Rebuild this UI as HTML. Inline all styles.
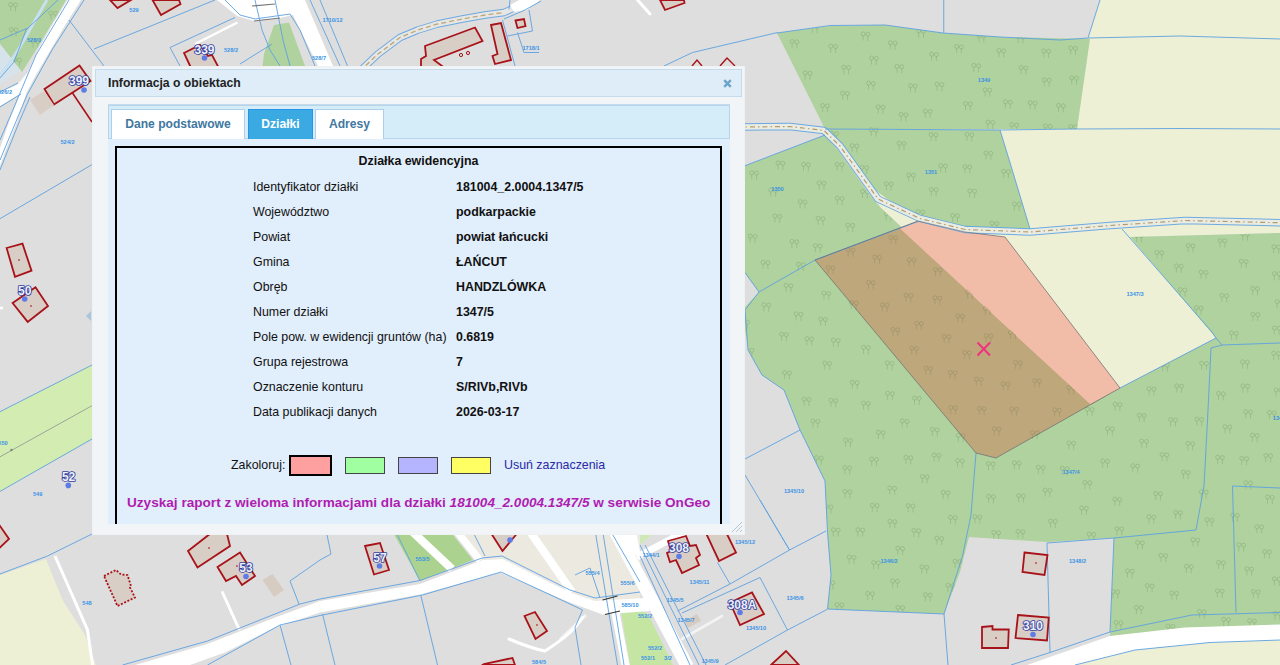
<!DOCTYPE html>
<html lang="pl"><head><meta charset="utf-8"><title>Informacja o obiektach</title>
<style>
html,body{margin:0;padding:0;width:1280px;height:665px;overflow:hidden;background:#dedede;font-family:"Liberation Sans",Arial,sans-serif}
#map{position:absolute;left:0;top:0;width:1280px;height:665px}
#dlg{position:absolute;left:92px;top:66px;width:653px;height:469px;background:#f2f5f7;box-sizing:border-box;border:1px solid #eef2f5}
#ttl{position:absolute;left:2px;top:2px;width:647px;height:28px;background:#deedf7;border:1px solid #c5dbec;box-sizing:border-box}
#ttl span{position:absolute;left:12px;top:6px;font-weight:bold;font-size:12.2px;color:#222;white-space:nowrap;line-height:15px}
#cls{position:absolute;left:627px;top:9px;width:9px;height:9px}
#tabs{position:absolute;left:15px;top:37px;width:622px;height:420px;background:#e1eefb;border-top:1px solid #c5dbec;box-sizing:border-box;overflow:hidden}
#nav{position:absolute;left:0;top:0;width:622px;height:34px;background:#d5ecf9;border:1px solid #b7d5ea;box-sizing:border-box}
.tab{position:absolute;top:3px;height:30px;box-sizing:border-box;background:#fff;border:1px solid #aed0ea;border-bottom:none;color:#41789f;font-weight:bold;font-size:12.1px;line-height:29px;text-align:center;white-space:nowrap}
.tab.on{background:#3baae3;border-color:#2694e8;color:#fff}
#box{position:absolute;left:7px;top:41px;width:607px;height:400px;border:2px solid #000;box-sizing:border-box;background:#e1eefb}
.r{position:absolute;left:0;width:603px;height:25px;line-height:25px;font-size:12.4px;color:#111;white-space:nowrap}
.r i{position:absolute;left:136px;font-style:normal}
.r b{position:absolute;left:339px}
#hd{position:absolute;left:0;top:0;width:603px;text-align:center;font-weight:bold;font-size:12.4px;line-height:24px;color:#111}
.sw{position:absolute;box-sizing:border-box;border:1px solid #444}
</style></head><body>
<svg id="map" viewBox="0 0 1280 665" width="1280" height="665">
<rect width="1280" height="665" fill="#dedede"/>
<polygon points="1100,0 1280,0 1280,233 1130,237 1216,338 1120,388 1090,404 880,207 875,190 1000,129 1088,38" fill="#eef0d5"/>
<polygon points="1075,665 1135,650 1210,642.5 1280,640 1280,665" fill="#eef0d5"/>
<polygon points="0,575 46,559 62.5,600 85,635 96,665 0,665" fill="#eef0d5"/>
<polygon points="0,411.7 92,365 92,439 0,491.4" fill="#d3ecb1"/>
<path d="M621 611H640Q648 612 651 620L673 665H630Z" fill="#c5e6a3"/>
<polygon points="634,530 658,530 641,544" fill="#cfe8b8"/>
<polygon points="455,530 640,530 640,600 595,602 570,592 502,559 482,560" fill="#ece9e1"/>
<polygon points="560,582 602,582 602,600 560,592" fill="#ece9e1"/>
<polygon points="777,33 830,26 885,25 943,33 1000,37 1090,39 1077,129 825,129" fill="#afd29e"/>
<polygon points="828,129 1000,130 1011,166 1030,229 965,227 920,216 890,201 875,190 855,165 840,143" fill="#afd29e"/>
<polygon points="700,183 825,135 838,150 870,195 880,207 1090,404 1120,388 1216,338 1130,237 1280,233 1280,626 1185,628 1110,637 1114,538 1047,542 969,537 960,572 944,614 827.5,609 831,575 827.5,532 825,481 800,430 784,390 762,375 749,352 745,330 745,307 759,292 745,273 700,260" fill="#afd29e"/>
<polygon points="0,0 66,0 36,50 22,72 0,44" fill="#afd29e"/>
<polygon points="274,25 289,22.5 305,66 262.5,66 264,54" fill="#afd29e"/>
<polygon points="391.7,530 449,530 473,560 420,581" fill="#abd38f"/>
<polygon points="815,260 918,221 965,232 1005,237 1120,388 996,458 976,453" fill="#bfa77c"/>
<polygon points="900,228.5 918,221 965,232 1005,237 1120,388 1090,404" fill="#f2bda8"/>
<clipPath id="gc"><polygon points="777,33 830,26 885,25 943,33 1000,37 1090,39 1077,129 825,129"/><polygon points="828,129 1000,130 1011,166 1030,229 965,227 920,216 890,201 875,190 855,165 840,143"/><polygon points="700,183 825,135 838,150 870,195 880,207 1090,404 1120,388 1216,338 1130,237 1280,233 1280,626 1185,628 1110,637 1114,538 1047,542 969,537 960,572 944,614 827.5,609 831,575 827.5,532 825,481 800,430 784,390 762,375 749,352 745,330 745,307 759,292 745,273 700,260"/><polygon points="0,0 66,0 36,50 22,72 0,44"/></clipPath>
<path clip-path="url(#gc)" fill="none" stroke="#3c6432" stroke-opacity=".17" stroke-width="1" d="M828.8 46.2a2 2 0 1 0 4 0a2 2 0 1 0-4 0M833.6 46.6a2 2 0 1 0 4 0a2 2 0 1 0-4 0M830.8 48.2v4.6M835.6 48.6v4.6M734.3 261.8a2 2 0 1 0 4 0a2 2 0 1 0-4 0M739.1 262.2a2 2 0 1 0 4 0a2 2 0 1 0-4 0M736.3 263.8v4.6M741.1 264.2v4.6M813.4 245.6a2 2 0 1 0 4 0a2 2 0 1 0-4 0M818.2 246.0a2 2 0 1 0 4 0a2 2 0 1 0-4 0M815.4 247.6v4.6M820.2 248.0v4.6M866.5 282.3a2 2 0 1 0 4 0a2 2 0 1 0-4 0M871.3 282.7a2 2 0 1 0 4 0a2 2 0 1 0-4 0M868.5 284.3v4.6M873.3 284.7v4.6M1012.4 462.8a2 2 0 1 0 4 0a2 2 0 1 0-4 0M1017.2 463.2a2 2 0 1 0 4 0a2 2 0 1 0-4 0M1014.4 464.8v4.6M1019.2 465.2v4.6M929.3 189.5a2 2 0 1 0 4 0a2 2 0 1 0-4 0M934.1 189.9a2 2 0 1 0 4 0a2 2 0 1 0-4 0M931.3 191.5v4.6M936.1 191.9v4.6M974.3 379.1a2 2 0 1 0 4 0a2 2 0 1 0-4 0M979.1 379.5a2 2 0 1 0 4 0a2 2 0 1 0-4 0M976.3 381.1v4.6M981.1 381.5v4.6M885.6 393.3a2 2 0 1 0 4 0a2 2 0 1 0-4 0M890.4 393.7a2 2 0 1 0 4 0a2 2 0 1 0-4 0M887.6 395.3v4.6M892.4 395.7v4.6M749.7 172.7a2 2 0 1 0 4 0a2 2 0 1 0-4 0M754.5 173.1a2 2 0 1 0 4 0a2 2 0 1 0-4 0M751.7 174.7v4.6M756.5 175.1v4.6M1215.6 457.2a2 2 0 1 0 4 0a2 2 0 1 0-4 0M1220.4 457.6a2 2 0 1 0 4 0a2 2 0 1 0-4 0M1217.6 459.2v4.6M1222.4 459.6v4.6M861.1 33.9a2 2 0 1 0 4 0a2 2 0 1 0-4 0M865.9 34.3a2 2 0 1 0 4 0a2 2 0 1 0-4 0M863.1 35.9v4.6M867.9 36.3v4.6M1147.0 516.7a2 2 0 1 0 4 0a2 2 0 1 0-4 0M1151.8 517.1a2 2 0 1 0 4 0a2 2 0 1 0-4 0M1149.0 518.7v4.6M1153.8 519.1v4.6M1115.0 528.6a2 2 0 1 0 4 0a2 2 0 1 0-4 0M1119.8 529.0a2 2 0 1 0 4 0a2 2 0 1 0-4 0M1117.0 530.6v4.6M1121.8 531.0v4.6M1056.5 105.4a2 2 0 1 0 4 0a2 2 0 1 0-4 0M1061.3 105.8a2 2 0 1 0 4 0a2 2 0 1 0-4 0M1058.5 107.4v4.6M1063.3 107.8v4.6M1100.7 461.0a2 2 0 1 0 4 0a2 2 0 1 0-4 0M1105.5 461.4a2 2 0 1 0 4 0a2 2 0 1 0-4 0M1102.7 463.0v4.6M1107.5 463.4v4.6M1087.0 534.0a2 2 0 1 0 4 0a2 2 0 1 0-4 0M1091.8 534.4a2 2 0 1 0 4 0a2 2 0 1 0-4 0M1089.0 536.0v4.6M1093.8 536.4v4.6M1043.1 490.0a2 2 0 1 0 4 0a2 2 0 1 0-4 0M1047.9 490.4a2 2 0 1 0 4 0a2 2 0 1 0-4 0M1045.1 492.0v4.6M1049.9 492.4v4.6M1219.9 295.4a2 2 0 1 0 4 0a2 2 0 1 0-4 0M1224.7 295.8a2 2 0 1 0 4 0a2 2 0 1 0-4 0M1221.9 297.4v4.6M1226.7 297.8v4.6M1218.0 240.5a2 2 0 1 0 4 0a2 2 0 1 0-4 0M1222.8 240.9a2 2 0 1 0 4 0a2 2 0 1 0-4 0M1220.0 242.5v4.6M1224.8 242.9v4.6M831.4 529.8a2 2 0 1 0 4 0a2 2 0 1 0-4 0M836.2 530.2a2 2 0 1 0 4 0a2 2 0 1 0-4 0M833.4 531.8v4.6M838.2 532.2v4.6M955.8 315.9a2 2 0 1 0 4 0a2 2 0 1 0-4 0M960.6 316.3a2 2 0 1 0 4 0a2 2 0 1 0-4 0M957.8 317.9v4.6M962.6 318.3v4.6M1239.3 261.2a2 2 0 1 0 4 0a2 2 0 1 0-4 0M1244.1 261.6a2 2 0 1 0 4 0a2 2 0 1 0-4 0M1241.3 263.2v4.6M1246.1 263.6v4.6M923.3 111.1a2 2 0 1 0 4 0a2 2 0 1 0-4 0M928.1 111.5a2 2 0 1 0 4 0a2 2 0 1 0-4 0M925.3 113.1v4.6M930.1 113.5v4.6M1250.4 435.1a2 2 0 1 0 4 0a2 2 0 1 0-4 0M1255.2 435.5a2 2 0 1 0 4 0a2 2 0 1 0-4 0M1252.4 437.1v4.6M1257.2 437.5v4.6M923.8 368.1a2 2 0 1 0 4 0a2 2 0 1 0-4 0M928.6 368.5a2 2 0 1 0 4 0a2 2 0 1 0-4 0M925.8 370.1v4.6M930.6 370.5v4.6M984.1 335.6a2 2 0 1 0 4 0a2 2 0 1 0-4 0M988.9 336.0a2 2 0 1 0 4 0a2 2 0 1 0-4 0M986.1 337.6v4.6M990.9 338.0v4.6M779.6 334.2a2 2 0 1 0 4 0a2 2 0 1 0-4 0M784.4 334.6a2 2 0 1 0 4 0a2 2 0 1 0-4 0M781.6 336.2v4.6M786.4 336.6v4.6M890.6 580.9a2 2 0 1 0 4 0a2 2 0 1 0-4 0M895.4 581.3a2 2 0 1 0 4 0a2 2 0 1 0-4 0M892.6 582.9v4.6M897.4 583.3v4.6M840.7 93.1a2 2 0 1 0 4 0a2 2 0 1 0-4 0M845.5 93.5a2 2 0 1 0 4 0a2 2 0 1 0-4 0M842.7 95.1v4.6M847.5 95.5v4.6M1262.6 551.6a2 2 0 1 0 4 0a2 2 0 1 0-4 0M1267.4 552.0a2 2 0 1 0 4 0a2 2 0 1 0-4 0M1264.6 553.6v4.6M1269.4 554.0v4.6M967.8 190.8a2 2 0 1 0 4 0a2 2 0 1 0-4 0M972.6 191.2a2 2 0 1 0 4 0a2 2 0 1 0-4 0M969.8 192.8v4.6M974.6 193.2v4.6M900.2 420.9a2 2 0 1 0 4 0a2 2 0 1 0-4 0M905.0 421.3a2 2 0 1 0 4 0a2 2 0 1 0-4 0M902.2 422.9v4.6M907.0 423.3v4.6M1240.6 361.8a2 2 0 1 0 4 0a2 2 0 1 0-4 0M1245.4 362.2a2 2 0 1 0 4 0a2 2 0 1 0-4 0M1242.6 363.8v4.6M1247.4 364.2v4.6M48.9 13.0a2 2 0 1 0 4 0a2 2 0 1 0-4 0M53.7 13.4a2 2 0 1 0 4 0a2 2 0 1 0-4 0M50.9 15.0v4.6M55.7 15.4v4.6M745.1 349.9a2 2 0 1 0 4 0a2 2 0 1 0-4 0M749.9 350.3a2 2 0 1 0 4 0a2 2 0 1 0-4 0M747.1 351.9v4.6M751.9 352.3v4.6M956.3 435.3a2 2 0 1 0 4 0a2 2 0 1 0-4 0M961.1 435.7a2 2 0 1 0 4 0a2 2 0 1 0-4 0M958.3 437.3v4.6M963.1 437.7v4.6M1137.3 415.2a2 2 0 1 0 4 0a2 2 0 1 0-4 0M1142.1 415.6a2 2 0 1 0 4 0a2 2 0 1 0-4 0M1139.3 417.2v4.6M1144.1 417.6v4.6M934.9 538.1a2 2 0 1 0 4 0a2 2 0 1 0-4 0M939.7 538.5a2 2 0 1 0 4 0a2 2 0 1 0-4 0M936.9 540.1v4.6M941.7 540.5v4.6M869.7 459.1a2 2 0 1 0 4 0a2 2 0 1 0-4 0M874.5 459.5a2 2 0 1 0 4 0a2 2 0 1 0-4 0M871.7 461.1v4.6M876.5 461.5v4.6M1016.7 495.6a2 2 0 1 0 4 0a2 2 0 1 0-4 0M1021.5 496.0a2 2 0 1 0 4 0a2 2 0 1 0-4 0M1018.7 497.6v4.6M1023.5 498.0v4.6M938.7 165.7a2 2 0 1 0 4 0a2 2 0 1 0-4 0M943.5 166.1a2 2 0 1 0 4 0a2 2 0 1 0-4 0M940.7 167.7v4.6M945.5 168.1v4.6M929.1 134.5a2 2 0 1 0 4 0a2 2 0 1 0-4 0M933.9 134.9a2 2 0 1 0 4 0a2 2 0 1 0-4 0M931.1 136.5v4.6M935.9 136.9v4.6M977.3 408.3a2 2 0 1 0 4 0a2 2 0 1 0-4 0M982.1 408.7a2 2 0 1 0 4 0a2 2 0 1 0-4 0M979.3 410.3v4.6M984.1 410.7v4.6M860.5 191.4a2 2 0 1 0 4 0a2 2 0 1 0-4 0M865.3 191.8a2 2 0 1 0 4 0a2 2 0 1 0-4 0M862.5 193.4v4.6M867.3 193.8v4.6M1247.6 620.6a2 2 0 1 0 4 0a2 2 0 1 0-4 0M1252.4 621.0a2 2 0 1 0 4 0a2 2 0 1 0-4 0M1249.6 622.6v4.6M1254.4 623.0v4.6M1130.8 465.7a2 2 0 1 0 4 0a2 2 0 1 0-4 0M1135.6 466.1a2 2 0 1 0 4 0a2 2 0 1 0-4 0M1132.8 467.7v4.6M1137.6 468.1v4.6M1069.7 77.8a2 2 0 1 0 4 0a2 2 0 1 0-4 0M1074.5 78.2a2 2 0 1 0 4 0a2 2 0 1 0-4 0M1071.7 79.8v4.6M1076.5 80.2v4.6M1181.4 472.2a2 2 0 1 0 4 0a2 2 0 1 0-4 0M1186.2 472.6a2 2 0 1 0 4 0a2 2 0 1 0-4 0M1183.4 474.2v4.6M1188.2 474.6v4.6M1274.1 389.8a2 2 0 1 0 4 0a2 2 0 1 0-4 0M1278.9 390.2a2 2 0 1 0 4 0a2 2 0 1 0-4 0M1276.1 391.8v4.6M1280.9 392.2v4.6M1199.7 363.2a2 2 0 1 0 4 0a2 2 0 1 0-4 0M1204.5 363.6a2 2 0 1 0 4 0a2 2 0 1 0-4 0M1201.7 365.2v4.6M1206.5 365.6v4.6M916.7 30.9a2 2 0 1 0 4 0a2 2 0 1 0-4 0M921.5 31.3a2 2 0 1 0 4 0a2 2 0 1 0-4 0M918.7 32.9v4.6M923.5 33.3v4.6M933.0 297.8a2 2 0 1 0 4 0a2 2 0 1 0-4 0M937.8 298.2a2 2 0 1 0 4 0a2 2 0 1 0-4 0M935.0 299.8v4.6M939.8 300.2v4.6M835.3 198.1a2 2 0 1 0 4 0a2 2 0 1 0-4 0M840.1 198.5a2 2 0 1 0 4 0a2 2 0 1 0-4 0M837.3 200.1v4.6M842.1 200.5v4.6M709.0 260.3a2 2 0 1 0 4 0a2 2 0 1 0-4 0M713.8 260.7a2 2 0 1 0 4 0a2 2 0 1 0-4 0M711.0 262.3v4.6M715.8 262.7v4.6M1216.6 562.4a2 2 0 1 0 4 0a2 2 0 1 0-4 0M1221.4 562.8a2 2 0 1 0 4 0a2 2 0 1 0-4 0M1218.6 564.4v4.6M1223.4 564.8v4.6M824.2 506.6a2 2 0 1 0 4 0a2 2 0 1 0-4 0M829.0 507.0a2 2 0 1 0 4 0a2 2 0 1 0-4 0M826.2 508.6v4.6M831.0 509.0v4.6M1223.0 426.6a2 2 0 1 0 4 0a2 2 0 1 0-4 0M1227.8 427.0a2 2 0 1 0 4 0a2 2 0 1 0-4 0M1225.0 428.6v4.6M1229.8 429.0v4.6M869.3 129.7a2 2 0 1 0 4 0a2 2 0 1 0-4 0M874.1 130.1a2 2 0 1 0 4 0a2 2 0 1 0-4 0M871.3 131.7v4.6M876.1 132.1v4.6M1145.3 585.6a2 2 0 1 0 4 0a2 2 0 1 0-4 0M1150.1 586.0a2 2 0 1 0 4 0a2 2 0 1 0-4 0M1147.3 587.6v4.6M1152.1 588.0v4.6M846.1 249.8a2 2 0 1 0 4 0a2 2 0 1 0-4 0M850.9 250.2a2 2 0 1 0 4 0a2 2 0 1 0-4 0M848.1 251.8v4.6M852.9 252.2v4.6M1168.7 419.6a2 2 0 1 0 4 0a2 2 0 1 0-4 0M1173.5 420.0a2 2 0 1 0 4 0a2 2 0 1 0-4 0M1170.7 421.6v4.6M1175.5 422.0v4.6M772.9 216.0a2 2 0 1 0 4 0a2 2 0 1 0-4 0M777.7 216.4a2 2 0 1 0 4 0a2 2 0 1 0-4 0M774.9 218.0v4.6M779.7 218.4v4.6M996.9 50.5a2 2 0 1 0 4 0a2 2 0 1 0-4 0M1001.7 50.9a2 2 0 1 0 4 0a2 2 0 1 0-4 0M998.9 52.5v4.6M1003.7 52.9v4.6M904.1 295.2a2 2 0 1 0 4 0a2 2 0 1 0-4 0M908.9 295.6a2 2 0 1 0 4 0a2 2 0 1 0-4 0M906.1 297.2v4.6M910.9 297.6v4.6M953.0 561.2a2 2 0 1 0 4 0a2 2 0 1 0-4 0M957.8 561.6a2 2 0 1 0 4 0a2 2 0 1 0-4 0M955.0 563.2v4.6M959.8 563.6v4.6M735.8 215.0a2 2 0 1 0 4 0a2 2 0 1 0-4 0M740.6 215.4a2 2 0 1 0 4 0a2 2 0 1 0-4 0M737.8 217.0v4.6M742.6 217.4v4.6M1030.4 432.5a2 2 0 1 0 4 0a2 2 0 1 0-4 0M1035.2 432.9a2 2 0 1 0 4 0a2 2 0 1 0-4 0M1032.4 434.5v4.6M1037.2 434.9v4.6M1241.0 385.8a2 2 0 1 0 4 0a2 2 0 1 0-4 0M1245.8 386.2a2 2 0 1 0 4 0a2 2 0 1 0-4 0M1243.0 387.8v4.6M1247.8 388.2v4.6M1186.2 245.5a2 2 0 1 0 4 0a2 2 0 1 0-4 0M1191.0 245.9a2 2 0 1 0 4 0a2 2 0 1 0-4 0M1188.2 247.5v4.6M1193.0 247.9v4.6M829.7 133.3a2 2 0 1 0 4 0a2 2 0 1 0-4 0M834.5 133.7a2 2 0 1 0 4 0a2 2 0 1 0-4 0M831.7 135.3v4.6M836.5 135.7v4.6M1013.6 362.4a2 2 0 1 0 4 0a2 2 0 1 0-4 0M1018.4 362.8a2 2 0 1 0 4 0a2 2 0 1 0-4 0M1015.6 364.4v4.6M1020.4 364.8v4.6M923.4 594.7a2 2 0 1 0 4 0a2 2 0 1 0-4 0M928.2 595.1a2 2 0 1 0 4 0a2 2 0 1 0-4 0M925.4 596.7v4.6M930.2 597.1v4.6M798.2 201.6a2 2 0 1 0 4 0a2 2 0 1 0-4 0M803.0 202.0a2 2 0 1 0 4 0a2 2 0 1 0-4 0M800.2 203.6v4.6M805.0 204.0v4.6M973.0 516.7a2 2 0 1 0 4 0a2 2 0 1 0-4 0M977.8 517.1a2 2 0 1 0 4 0a2 2 0 1 0-4 0M975.0 518.7v4.6M979.8 519.1v4.6M963.5 103.6a2 2 0 1 0 4 0a2 2 0 1 0-4 0M968.3 104.0a2 2 0 1 0 4 0a2 2 0 1 0-4 0M965.5 105.6v4.6M970.3 106.0v4.6M865.6 593.4a2 2 0 1 0 4 0a2 2 0 1 0-4 0M870.4 593.8a2 2 0 1 0 4 0a2 2 0 1 0-4 0M867.6 595.4v4.6M872.4 595.8v4.6M784.1 285.4a2 2 0 1 0 4 0a2 2 0 1 0-4 0M788.9 285.8a2 2 0 1 0 4 0a2 2 0 1 0-4 0M786.1 287.4v4.6M790.9 287.8v4.6M794.2 313.8a2 2 0 1 0 4 0a2 2 0 1 0-4 0M799.0 314.2a2 2 0 1 0 4 0a2 2 0 1 0-4 0M796.2 315.8v4.6M801.0 316.2v4.6M715.4 231.0a2 2 0 1 0 4 0a2 2 0 1 0-4 0M720.2 231.4a2 2 0 1 0 4 0a2 2 0 1 0-4 0M717.4 233.0v4.6M722.2 233.4v4.6M822.0 293.1a2 2 0 1 0 4 0a2 2 0 1 0-4 0M826.8 293.5a2 2 0 1 0 4 0a2 2 0 1 0-4 0M824.0 295.1v4.6M828.8 295.5v4.6M906.6 174.9a2 2 0 1 0 4 0a2 2 0 1 0-4 0M911.4 175.3a2 2 0 1 0 4 0a2 2 0 1 0-4 0M908.6 176.9v4.6M913.4 177.3v4.6M950.7 215.4a2 2 0 1 0 4 0a2 2 0 1 0-4 0M955.5 215.8a2 2 0 1 0 4 0a2 2 0 1 0-4 0M952.7 217.4v4.6M957.5 217.8v4.6M887.8 488.0a2 2 0 1 0 4 0a2 2 0 1 0-4 0M892.6 488.4a2 2 0 1 0 4 0a2 2 0 1 0-4 0M889.8 490.0v4.6M894.6 490.4v4.6M1166.0 626.0a2 2 0 1 0 4 0a2 2 0 1 0-4 0M1170.8 626.4a2 2 0 1 0 4 0a2 2 0 1 0-4 0M1168.0 628.0v4.6M1172.8 628.4v4.6M965.0 134.3a2 2 0 1 0 4 0a2 2 0 1 0-4 0M969.8 134.7a2 2 0 1 0 4 0a2 2 0 1 0-4 0M967.0 136.3v4.6M971.8 136.7v4.6M1229.5 333.0a2 2 0 1 0 4 0a2 2 0 1 0-4 0M1234.3 333.4a2 2 0 1 0 4 0a2 2 0 1 0-4 0M1231.5 335.0v4.6M1236.3 335.4v4.6M1085.4 409.2a2 2 0 1 0 4 0a2 2 0 1 0-4 0M1090.2 409.6a2 2 0 1 0 4 0a2 2 0 1 0-4 0M1087.4 411.2v4.6M1092.2 411.6v4.6M890.9 329.4a2 2 0 1 0 4 0a2 2 0 1 0-4 0M895.7 329.8a2 2 0 1 0 4 0a2 2 0 1 0-4 0M892.9 331.4v4.6M897.7 331.8v4.6M888.0 521.3a2 2 0 1 0 4 0a2 2 0 1 0-4 0M892.8 521.7a2 2 0 1 0 4 0a2 2 0 1 0-4 0M890.0 523.3v4.6M894.8 523.7v4.6M843.1 491.4a2 2 0 1 0 4 0a2 2 0 1 0-4 0M847.9 491.8a2 2 0 1 0 4 0a2 2 0 1 0-4 0M845.1 493.4v4.6M849.9 493.8v4.6M1243.8 482.6a2 2 0 1 0 4 0a2 2 0 1 0-4 0M1248.6 483.0a2 2 0 1 0 4 0a2 2 0 1 0-4 0M1245.8 484.6v4.6M1250.6 485.0v4.6M1254.9 526.6a2 2 0 1 0 4 0a2 2 0 1 0-4 0M1259.7 527.0a2 2 0 1 0 4 0a2 2 0 1 0-4 0M1256.9 528.6v4.6M1261.7 529.0v4.6M986.4 463.6a2 2 0 1 0 4 0a2 2 0 1 0-4 0M991.2 464.0a2 2 0 1 0 4 0a2 2 0 1 0-4 0M988.4 465.6v4.6M993.2 466.0v4.6M801.5 164.3a2 2 0 1 0 4 0a2 2 0 1 0-4 0M806.3 164.7a2 2 0 1 0 4 0a2 2 0 1 0-4 0M803.5 166.3v4.6M808.3 166.7v4.6M1184.4 566.2a2 2 0 1 0 4 0a2 2 0 1 0-4 0M1189.2 566.6a2 2 0 1 0 4 0a2 2 0 1 0-4 0M1186.4 568.2v4.6M1191.2 568.6v4.6M835.2 164.3a2 2 0 1 0 4 0a2 2 0 1 0-4 0M840.0 164.7a2 2 0 1 0 4 0a2 2 0 1 0-4 0M837.2 166.3v4.6M842.0 166.7v4.6M847.2 557.0a2 2 0 1 0 4 0a2 2 0 1 0-4 0M852.0 557.4a2 2 0 1 0 4 0a2 2 0 1 0-4 0M849.2 559.0v4.6M854.0 559.4v4.6M811.0 421.0a2 2 0 1 0 4 0a2 2 0 1 0-4 0M815.8 421.4a2 2 0 1 0 4 0a2 2 0 1 0-4 0M813.0 423.0v4.6M817.8 423.4v4.6M849.4 302.5a2 2 0 1 0 4 0a2 2 0 1 0-4 0M854.2 302.9a2 2 0 1 0 4 0a2 2 0 1 0-4 0M851.4 304.5v4.6M856.2 304.9v4.6M971.8 65.4a2 2 0 1 0 4 0a2 2 0 1 0-4 0M976.6 65.8a2 2 0 1 0 4 0a2 2 0 1 0-4 0M973.8 67.4v4.6M978.6 67.8v4.6M1048.5 521.0a2 2 0 1 0 4 0a2 2 0 1 0-4 0M1053.3 521.4a2 2 0 1 0 4 0a2 2 0 1 0-4 0M1050.5 523.0v4.6M1055.3 523.4v4.6M1032.8 380.6a2 2 0 1 0 4 0a2 2 0 1 0-4 0M1037.6 381.0a2 2 0 1 0 4 0a2 2 0 1 0-4 0M1034.8 382.6v4.6M1039.6 383.0v4.6M1251.0 314.2a2 2 0 1 0 4 0a2 2 0 1 0-4 0M1255.8 314.6a2 2 0 1 0 4 0a2 2 0 1 0-4 0M1253.0 316.2v4.6M1257.8 316.6v4.6M929.6 54.1a2 2 0 1 0 4 0a2 2 0 1 0-4 0M934.4 54.5a2 2 0 1 0 4 0a2 2 0 1 0-4 0M931.6 56.1v4.6M936.4 56.5v4.6M1041.8 51.0a2 2 0 1 0 4 0a2 2 0 1 0-4 0M1046.6 51.4a2 2 0 1 0 4 0a2 2 0 1 0-4 0M1043.8 53.0v4.6M1048.6 53.4v4.6M1205.1 519.8a2 2 0 1 0 4 0a2 2 0 1 0-4 0M1209.9 520.2a2 2 0 1 0 4 0a2 2 0 1 0-4 0M1207.1 521.8v4.6M1211.9 522.2v4.6M721.1 192.4a2 2 0 1 0 4 0a2 2 0 1 0-4 0M725.9 192.8a2 2 0 1 0 4 0a2 2 0 1 0-4 0M723.1 194.4v4.6M727.9 194.8v4.6M895.8 548.2a2 2 0 1 0 4 0a2 2 0 1 0-4 0M900.6 548.6a2 2 0 1 0 4 0a2 2 0 1 0-4 0M897.8 550.2v4.6M902.6 550.6v4.6M984.0 152.9a2 2 0 1 0 4 0a2 2 0 1 0-4 0M988.8 153.3a2 2 0 1 0 4 0a2 2 0 1 0-4 0M986.0 154.9v4.6M990.8 155.3v4.6M1271.9 246.7a2 2 0 1 0 4 0a2 2 0 1 0-4 0M1276.7 247.1a2 2 0 1 0 4 0a2 2 0 1 0-4 0M1273.9 248.7v4.6M1278.7 249.1v4.6M1003.4 101.8a2 2 0 1 0 4 0a2 2 0 1 0-4 0M1008.2 102.2a2 2 0 1 0 4 0a2 2 0 1 0-4 0M1005.4 103.8v4.6M1010.2 104.2v4.6M761.1 262.3a2 2 0 1 0 4 0a2 2 0 1 0-4 0M765.9 262.7a2 2 0 1 0 4 0a2 2 0 1 0-4 0M763.1 264.3v4.6M767.9 264.7v4.6M1273.1 613.2a2 2 0 1 0 4 0a2 2 0 1 0-4 0M1277.9 613.6a2 2 0 1 0 4 0a2 2 0 1 0-4 0M1275.1 615.2v4.6M1279.9 615.6v4.6M933.5 269.4a2 2 0 1 0 4 0a2 2 0 1 0-4 0M938.3 269.8a2 2 0 1 0 4 0a2 2 0 1 0-4 0M935.5 271.4v4.6M940.3 271.8v4.6M895.0 66.4a2 2 0 1 0 4 0a2 2 0 1 0-4 0M899.8 66.8a2 2 0 1 0 4 0a2 2 0 1 0-4 0M897.0 68.4v4.6M901.8 68.8v4.6M990.0 223.1a2 2 0 1 0 4 0a2 2 0 1 0-4 0M994.8 223.5a2 2 0 1 0 4 0a2 2 0 1 0-4 0M992.0 225.1v4.6M996.8 225.5v4.6M1221.7 619.3a2 2 0 1 0 4 0a2 2 0 1 0-4 0M1226.5 619.7a2 2 0 1 0 4 0a2 2 0 1 0-4 0M1223.7 621.3v4.6M1228.5 621.7v4.6M1194.9 419.1a2 2 0 1 0 4 0a2 2 0 1 0-4 0M1199.7 419.5a2 2 0 1 0 4 0a2 2 0 1 0-4 0M1196.9 421.1v4.6M1201.7 421.5v4.6M941.2 492.3a2 2 0 1 0 4 0a2 2 0 1 0-4 0M946.0 492.7a2 2 0 1 0 4 0a2 2 0 1 0-4 0M943.2 494.3v4.6M948.0 494.7v4.6M9.3 29.5a2 2 0 1 0 4 0a2 2 0 1 0-4 0M14.1 29.9a2 2 0 1 0 4 0a2 2 0 1 0-4 0M11.3 31.5v4.6M16.1 31.9v4.6M1173.6 512.4a2 2 0 1 0 4 0a2 2 0 1 0-4 0M1178.4 512.8a2 2 0 1 0 4 0a2 2 0 1 0-4 0M1175.6 514.4v4.6M1180.4 514.8v4.6M872.7 257.0a2 2 0 1 0 4 0a2 2 0 1 0-4 0M877.5 257.4a2 2 0 1 0 4 0a2 2 0 1 0-4 0M874.7 259.0v4.6M879.5 259.4v4.6M861.5 347.3a2 2 0 1 0 4 0a2 2 0 1 0-4 0M866.3 347.7a2 2 0 1 0 4 0a2 2 0 1 0-4 0M863.5 349.3v4.6M868.3 349.7v4.6M802.1 399.1a2 2 0 1 0 4 0a2 2 0 1 0-4 0M806.9 399.5a2 2 0 1 0 4 0a2 2 0 1 0-4 0M804.1 401.1v4.6M808.9 401.5v4.6M810.3 26.1a2 2 0 1 0 4 0a2 2 0 1 0-4 0M815.1 26.5a2 2 0 1 0 4 0a2 2 0 1 0-4 0M812.3 28.1v4.6M817.1 28.5v4.6M845.9 225.0a2 2 0 1 0 4 0a2 2 0 1 0-4 0M850.7 225.4a2 2 0 1 0 4 0a2 2 0 1 0-4 0M847.9 227.0v4.6M852.7 227.4v4.6M1147.1 388.7a2 2 0 1 0 4 0a2 2 0 1 0-4 0M1151.9 389.1a2 2 0 1 0 4 0a2 2 0 1 0-4 0M1149.1 390.7v4.6M1153.9 391.1v4.6M1125.5 570.8a2 2 0 1 0 4 0a2 2 0 1 0-4 0M1130.3 571.2a2 2 0 1 0 4 0a2 2 0 1 0-4 0M1127.5 572.8v4.6M1132.3 573.2v4.6M761.9 304.7a2 2 0 1 0 4 0a2 2 0 1 0-4 0M766.7 305.1a2 2 0 1 0 4 0a2 2 0 1 0-4 0M763.9 306.7v4.6M768.7 307.1v4.6M1265.5 497.0a2 2 0 1 0 4 0a2 2 0 1 0-4 0M1270.3 497.4a2 2 0 1 0 4 0a2 2 0 1 0-4 0M1267.5 499.0v4.6M1272.3 499.4v4.6M876.2 106.8a2 2 0 1 0 4 0a2 2 0 1 0-4 0M881.0 107.2a2 2 0 1 0 4 0a2 2 0 1 0-4 0M878.2 108.8v4.6M883.0 109.2v4.6M861.5 403.1a2 2 0 1 0 4 0a2 2 0 1 0-4 0M866.3 403.5a2 2 0 1 0 4 0a2 2 0 1 0-4 0M863.5 405.1v4.6M868.3 405.5v4.6M859.9 167.3a2 2 0 1 0 4 0a2 2 0 1 0-4 0M864.7 167.7a2 2 0 1 0 4 0a2 2 0 1 0-4 0M861.9 169.3v4.6M866.7 169.7v4.6M1113.1 404.2a2 2 0 1 0 4 0a2 2 0 1 0-4 0M1117.9 404.6a2 2 0 1 0 4 0a2 2 0 1 0-4 0M1115.1 406.2v4.6M1119.9 406.6v4.6M942.2 336.4a2 2 0 1 0 4 0a2 2 0 1 0-4 0M947.0 336.8a2 2 0 1 0 4 0a2 2 0 1 0-4 0M944.2 338.4v4.6M949.0 338.8v4.6M1174.8 385.9a2 2 0 1 0 4 0a2 2 0 1 0-4 0M1179.6 386.3a2 2 0 1 0 4 0a2 2 0 1 0-4 0M1176.8 387.9v4.6M1181.6 388.3v4.6M897.2 143.2a2 2 0 1 0 4 0a2 2 0 1 0-4 0M902.0 143.6a2 2 0 1 0 4 0a2 2 0 1 0-4 0M899.2 145.2v4.6M904.0 145.6v4.6M826.2 267.5a2 2 0 1 0 4 0a2 2 0 1 0-4 0M831.0 267.9a2 2 0 1 0 4 0a2 2 0 1 0-4 0M828.2 269.5v4.6M833.0 269.9v4.6M906.2 505.6a2 2 0 1 0 4 0a2 2 0 1 0-4 0M911.0 506.0a2 2 0 1 0 4 0a2 2 0 1 0-4 0M908.2 507.6v4.6M913.0 508.0v4.6M869.5 58.0a2 2 0 1 0 4 0a2 2 0 1 0-4 0M874.3 58.4a2 2 0 1 0 4 0a2 2 0 1 0-4 0M871.5 60.0v4.6M876.3 60.4v4.6M876.4 432.3a2 2 0 1 0 4 0a2 2 0 1 0-4 0M881.2 432.7a2 2 0 1 0 4 0a2 2 0 1 0-4 0M878.4 434.3v4.6M883.2 434.7v4.6M884.2 213.7a2 2 0 1 0 4 0a2 2 0 1 0-4 0M889.0 214.1a2 2 0 1 0 4 0a2 2 0 1 0-4 0M886.2 215.7v4.6M891.0 216.1v4.6M822.8 363.1a2 2 0 1 0 4 0a2 2 0 1 0-4 0M827.6 363.5a2 2 0 1 0 4 0a2 2 0 1 0-4 0M824.8 365.1v4.6M829.6 365.5v4.6M907.2 259.7a2 2 0 1 0 4 0a2 2 0 1 0-4 0M912.0 260.1a2 2 0 1 0 4 0a2 2 0 1 0-4 0M909.2 261.7v4.6M914.0 262.1v4.6M1042.3 79.8a2 2 0 1 0 4 0a2 2 0 1 0-4 0M1047.1 80.2a2 2 0 1 0 4 0a2 2 0 1 0-4 0M1044.3 81.8v4.6M1049.1 82.2v4.6M1009.8 408.9a2 2 0 1 0 4 0a2 2 0 1 0-4 0M1014.6 409.3a2 2 0 1 0 4 0a2 2 0 1 0-4 0M1011.8 410.9v4.6M1016.6 411.3v4.6M1199.2 272.0a2 2 0 1 0 4 0a2 2 0 1 0-4 0M1204.0 272.4a2 2 0 1 0 4 0a2 2 0 1 0-4 0M1201.2 274.0v4.6M1206.0 274.4v4.6M1153.7 493.4a2 2 0 1 0 4 0a2 2 0 1 0-4 0M1158.5 493.8a2 2 0 1 0 4 0a2 2 0 1 0-4 0M1155.7 495.4v4.6M1160.5 495.8v4.6M1139.7 441.1a2 2 0 1 0 4 0a2 2 0 1 0-4 0M1144.5 441.5a2 2 0 1 0 4 0a2 2 0 1 0-4 0M1141.7 443.1v4.6M1146.5 443.5v4.6M1215.4 590.8a2 2 0 1 0 4 0a2 2 0 1 0-4 0M1220.2 591.2a2 2 0 1 0 4 0a2 2 0 1 0-4 0M1217.4 592.8v4.6M1222.2 593.2v4.6M904.0 457.4a2 2 0 1 0 4 0a2 2 0 1 0-4 0M908.8 457.8a2 2 0 1 0 4 0a2 2 0 1 0-4 0M906.0 459.4v4.6M910.8 459.8v4.6M1199.3 491.7a2 2 0 1 0 4 0a2 2 0 1 0-4 0M1204.1 492.1a2 2 0 1 0 4 0a2 2 0 1 0-4 0M1201.3 493.7v4.6M1206.1 494.1v4.6M850.4 382.3a2 2 0 1 0 4 0a2 2 0 1 0-4 0M855.2 382.7a2 2 0 1 0 4 0a2 2 0 1 0-4 0M852.4 384.3v4.6M857.2 384.7v4.6M826.1 582.3a2 2 0 1 0 4 0a2 2 0 1 0-4 0M830.9 582.7a2 2 0 1 0 4 0a2 2 0 1 0-4 0M828.1 584.3v4.6M832.9 584.7v4.6M920.4 476.5a2 2 0 1 0 4 0a2 2 0 1 0-4 0M925.2 476.9a2 2 0 1 0 4 0a2 2 0 1 0-4 0M922.4 478.5v4.6M927.2 478.9v4.6M1250.7 288.4a2 2 0 1 0 4 0a2 2 0 1 0-4 0M1255.5 288.8a2 2 0 1 0 4 0a2 2 0 1 0-4 0M1252.7 290.4v4.6M1257.5 290.8v4.6M1155.0 252.4a2 2 0 1 0 4 0a2 2 0 1 0-4 0M1159.8 252.8a2 2 0 1 0 4 0a2 2 0 1 0-4 0M1157.0 254.4v4.6M1161.8 254.8v4.6M1134.4 607.4a2 2 0 1 0 4 0a2 2 0 1 0-4 0M1139.2 607.8a2 2 0 1 0 4 0a2 2 0 1 0-4 0M1136.4 609.4v4.6M1141.2 609.8v4.6M948.2 372.3a2 2 0 1 0 4 0a2 2 0 1 0-4 0M953.0 372.7a2 2 0 1 0 4 0a2 2 0 1 0-4 0M950.2 374.3v4.6M955.0 374.7v4.6M831.4 340.2a2 2 0 1 0 4 0a2 2 0 1 0-4 0M836.2 340.6a2 2 0 1 0 4 0a2 2 0 1 0-4 0M833.4 342.2v4.6M838.2 342.6v4.6M1275.1 301.6a2 2 0 1 0 4 0a2 2 0 1 0-4 0M1279.9 302.0a2 2 0 1 0 4 0a2 2 0 1 0-4 0M1277.1 303.6v4.6M1281.9 304.0v4.6M855.9 529.7a2 2 0 1 0 4 0a2 2 0 1 0-4 0M860.7 530.1a2 2 0 1 0 4 0a2 2 0 1 0-4 0M857.9 531.7v4.6M862.7 532.1v4.6M1016.0 531.3a2 2 0 1 0 4 0a2 2 0 1 0-4 0M1020.8 531.7a2 2 0 1 0 4 0a2 2 0 1 0-4 0M1018.0 533.3v4.6M1022.8 533.7v4.6M814.5 457.7a2 2 0 1 0 4 0a2 2 0 1 0-4 0M819.3 458.1a2 2 0 1 0 4 0a2 2 0 1 0-4 0M816.5 459.7v4.6M821.3 460.1v4.6M1012.4 203.9a2 2 0 1 0 4 0a2 2 0 1 0-4 0M1017.2 204.3a2 2 0 1 0 4 0a2 2 0 1 0-4 0M1014.4 205.9v4.6M1019.2 206.3v4.6M768.8 190.0a2 2 0 1 0 4 0a2 2 0 1 0-4 0M773.6 190.4a2 2 0 1 0 4 0a2 2 0 1 0-4 0M770.8 192.0v4.6M775.6 192.4v4.6M935.1 84.2a2 2 0 1 0 4 0a2 2 0 1 0-4 0M939.9 84.6a2 2 0 1 0 4 0a2 2 0 1 0-4 0M937.1 86.2v4.6M941.9 86.6v4.6M1160.6 364.7a2 2 0 1 0 4 0a2 2 0 1 0-4 0M1165.4 365.1a2 2 0 1 0 4 0a2 2 0 1 0-4 0M1162.6 366.7v4.6M1167.4 367.1v4.6M1083.0 482.4a2 2 0 1 0 4 0a2 2 0 1 0-4 0M1087.8 482.8a2 2 0 1 0 4 0a2 2 0 1 0-4 0M1085.0 484.4v4.6M1089.8 484.8v4.6M1001.6 171.3a2 2 0 1 0 4 0a2 2 0 1 0-4 0M1006.4 171.7a2 2 0 1 0 4 0a2 2 0 1 0-4 0M1003.6 173.3v4.6M1008.4 173.7v4.6M1112.9 499.1a2 2 0 1 0 4 0a2 2 0 1 0-4 0M1117.7 499.5a2 2 0 1 0 4 0a2 2 0 1 0-4 0M1114.9 501.1v4.6M1119.7 501.5v4.6M899.1 114.4a2 2 0 1 0 4 0a2 2 0 1 0-4 0M903.9 114.8a2 2 0 1 0 4 0a2 2 0 1 0-4 0M901.1 116.4v4.6M905.9 116.8v4.6M1263.8 455.5a2 2 0 1 0 4 0a2 2 0 1 0-4 0M1268.6 455.9a2 2 0 1 0 4 0a2 2 0 1 0-4 0M1265.8 457.5v4.6M1270.6 457.9v4.6M930.4 429.4a2 2 0 1 0 4 0a2 2 0 1 0-4 0M935.2 429.8a2 2 0 1 0 4 0a2 2 0 1 0-4 0M932.4 431.4v4.6M937.2 431.8v4.6M696.4 206.7a2 2 0 1 0 4 0a2 2 0 1 0-4 0M701.2 207.1a2 2 0 1 0 4 0a2 2 0 1 0-4 0M698.4 208.7v4.6M703.2 209.1v4.6M1066.8 442.9a2 2 0 1 0 4 0a2 2 0 1 0-4 0M1071.6 443.3a2 2 0 1 0 4 0a2 2 0 1 0-4 0M1068.8 444.9v4.6M1073.6 445.3v4.6M888.3 42.7a2 2 0 1 0 4 0a2 2 0 1 0-4 0M893.1 43.1a2 2 0 1 0 4 0a2 2 0 1 0-4 0M890.3 44.7v4.6M895.1 45.1v4.6M1267.4 412.5a2 2 0 1 0 4 0a2 2 0 1 0-4 0M1272.2 412.9a2 2 0 1 0 4 0a2 2 0 1 0-4 0M1269.4 414.5v4.6M1274.2 414.9v4.6M1191.0 539.7a2 2 0 1 0 4 0a2 2 0 1 0-4 0M1195.8 540.1a2 2 0 1 0 4 0a2 2 0 1 0-4 0M1193.0 541.7v4.6M1197.8 542.1v4.6M1019.1 67.6a2 2 0 1 0 4 0a2 2 0 1 0-4 0M1023.9 68.0a2 2 0 1 0 4 0a2 2 0 1 0-4 0M1021.1 69.6v4.6M1025.9 70.0v4.6M782.6 372.6a2 2 0 1 0 4 0a2 2 0 1 0-4 0M787.4 373.0a2 2 0 1 0 4 0a2 2 0 1 0-4 0M784.6 374.6v4.6M789.4 375.0v4.6M843.6 440.1a2 2 0 1 0 4 0a2 2 0 1 0-4 0M848.4 440.5a2 2 0 1 0 4 0a2 2 0 1 0-4 0M845.6 442.1v4.6M850.4 442.5v4.6M1236.9 544.7a2 2 0 1 0 4 0a2 2 0 1 0-4 0M1241.7 545.1a2 2 0 1 0 4 0a2 2 0 1 0-4 0M1238.9 546.7v4.6M1243.7 547.1v4.6M1251.3 591.5a2 2 0 1 0 4 0a2 2 0 1 0-4 0M1256.1 591.9a2 2 0 1 0 4 0a2 2 0 1 0-4 0M1253.3 593.5v4.6M1258.1 593.9v4.6M1230.6 515.0a2 2 0 1 0 4 0a2 2 0 1 0-4 0M1235.4 515.4a2 2 0 1 0 4 0a2 2 0 1 0-4 0M1232.6 517.0v4.6M1237.4 517.4v4.6M1066.9 387.6a2 2 0 1 0 4 0a2 2 0 1 0-4 0M1071.7 388.0a2 2 0 1 0 4 0a2 2 0 1 0-4 0M1068.9 389.6v4.6M1073.7 390.0v4.6M790.1 41.5a2 2 0 1 0 4 0a2 2 0 1 0-4 0M794.9 41.9a2 2 0 1 0 4 0a2 2 0 1 0-4 0M792.1 43.5v4.6M796.9 43.9v4.6M871.6 562.5a2 2 0 1 0 4 0a2 2 0 1 0-4 0M876.4 562.9a2 2 0 1 0 4 0a2 2 0 1 0-4 0M873.6 564.5v4.6M878.4 564.9v4.6M983.3 308.4a2 2 0 1 0 4 0a2 2 0 1 0-4 0M988.1 308.8a2 2 0 1 0 4 0a2 2 0 1 0-4 0M985.3 310.4v4.6M990.1 310.8v4.6M955.5 460.6a2 2 0 1 0 4 0a2 2 0 1 0-4 0M960.3 461.0a2 2 0 1 0 4 0a2 2 0 1 0-4 0M957.5 462.6v4.6M962.3 463.0v4.6M986.6 496.3a2 2 0 1 0 4 0a2 2 0 1 0-4 0M991.4 496.7a2 2 0 1 0 4 0a2 2 0 1 0-4 0M988.6 498.3v4.6M993.4 498.7v4.6M1178.2 289.6a2 2 0 1 0 4 0a2 2 0 1 0-4 0M1183.0 290.0a2 2 0 1 0 4 0a2 2 0 1 0-4 0M1180.2 291.6v4.6M1185.0 292.0v4.6M1114.1 622.4a2 2 0 1 0 4 0a2 2 0 1 0-4 0M1118.9 622.8a2 2 0 1 0 4 0a2 2 0 1 0-4 0M1116.1 624.4v4.6M1120.9 624.8v4.6M1159.0 555.4a2 2 0 1 0 4 0a2 2 0 1 0-4 0M1163.8 555.8a2 2 0 1 0 4 0a2 2 0 1 0-4 0M1161.0 557.4v4.6M1165.8 557.8v4.6M908.5 85.7a2 2 0 1 0 4 0a2 2 0 1 0-4 0M913.3 86.1a2 2 0 1 0 4 0a2 2 0 1 0-4 0M910.5 87.7v4.6M915.3 88.1v4.6M1185.8 443.3a2 2 0 1 0 4 0a2 2 0 1 0-4 0M1190.6 443.7a2 2 0 1 0 4 0a2 2 0 1 0-4 0M1187.8 445.3v4.6M1192.6 445.7v4.6M12.7 59.7a2 2 0 1 0 4 0a2 2 0 1 0-4 0M17.5 60.1a2 2 0 1 0 4 0a2 2 0 1 0-4 0M14.7 61.7v4.6M19.5 62.1v4.6M1272.3 327.9a2 2 0 1 0 4 0a2 2 0 1 0-4 0M1277.1 328.3a2 2 0 1 0 4 0a2 2 0 1 0-4 0M1274.3 329.9v4.6M1279.1 330.3v4.6M1052.7 409.8a2 2 0 1 0 4 0a2 2 0 1 0-4 0M1057.5 410.2a2 2 0 1 0 4 0a2 2 0 1 0-4 0M1054.7 411.8v4.6M1059.5 412.2v4.6M1134.6 235.4a2 2 0 1 0 4 0a2 2 0 1 0-4 0M1139.4 235.8a2 2 0 1 0 4 0a2 2 0 1 0-4 0M1136.6 237.4v4.6M1141.4 237.8v4.6M1216.5 393.4a2 2 0 1 0 4 0a2 2 0 1 0-4 0M1221.3 393.8a2 2 0 1 0 4 0a2 2 0 1 0-4 0M1218.5 395.4v4.6M1223.3 395.8v4.6M1197.5 611.4a2 2 0 1 0 4 0a2 2 0 1 0-4 0M1202.3 611.8a2 2 0 1 0 4 0a2 2 0 1 0-4 0M1199.5 613.4v4.6M1204.3 613.8v4.6M8.7 4.5a2 2 0 1 0 4 0a2 2 0 1 0-4 0M13.5 4.9a2 2 0 1 0 4 0a2 2 0 1 0-4 0M10.7 6.5v4.6M15.5 6.9v4.6M829.0 400.3a2 2 0 1 0 4 0a2 2 0 1 0-4 0M833.8 400.7a2 2 0 1 0 4 0a2 2 0 1 0-4 0M831.0 402.3v4.6M835.8 402.7v4.6M992.3 428.7a2 2 0 1 0 4 0a2 2 0 1 0-4 0M997.1 429.1a2 2 0 1 0 4 0a2 2 0 1 0-4 0M994.3 430.7v4.6M999.1 431.1v4.6M697.1 180.7a2 2 0 1 0 4 0a2 2 0 1 0-4 0M701.9 181.1a2 2 0 1 0 4 0a2 2 0 1 0-4 0M699.1 182.7v4.6M703.9 183.1v4.6M948.8 407.5a2 2 0 1 0 4 0a2 2 0 1 0-4 0M953.6 407.9a2 2 0 1 0 4 0a2 2 0 1 0-4 0M950.8 409.5v4.6M955.6 409.9v4.6M1169.8 593.0a2 2 0 1 0 4 0a2 2 0 1 0-4 0M1174.6 593.4a2 2 0 1 0 4 0a2 2 0 1 0-4 0M1171.8 595.0v4.6M1176.6 595.4v4.6M954.6 46.5a2 2 0 1 0 4 0a2 2 0 1 0-4 0M959.4 46.9a2 2 0 1 0 4 0a2 2 0 1 0-4 0M956.6 48.5v4.6M961.4 48.9v4.6M803.2 72.9a2 2 0 1 0 4 0a2 2 0 1 0-4 0M808.0 73.3a2 2 0 1 0 4 0a2 2 0 1 0-4 0M805.2 74.9v4.6M810.0 75.3v4.6M962.6 352.5a2 2 0 1 0 4 0a2 2 0 1 0-4 0M967.4 352.9a2 2 0 1 0 4 0a2 2 0 1 0-4 0M964.6 354.5v4.6M969.4 354.9v4.6M948.5 517.4a2 2 0 1 0 4 0a2 2 0 1 0-4 0M953.3 517.8a2 2 0 1 0 4 0a2 2 0 1 0-4 0M950.5 519.4v4.6M955.3 519.8v4.6M885.3 363.0a2 2 0 1 0 4 0a2 2 0 1 0-4 0M890.1 363.4a2 2 0 1 0 4 0a2 2 0 1 0-4 0M887.3 365.0v4.6M892.1 365.4v4.6M740.6 321.8a2 2 0 1 0 4 0a2 2 0 1 0-4 0M745.4 322.2a2 2 0 1 0 4 0a2 2 0 1 0-4 0M742.6 323.8v4.6M747.4 324.2v4.6M916.0 211.5a2 2 0 1 0 4 0a2 2 0 1 0-4 0M920.8 211.9a2 2 0 1 0 4 0a2 2 0 1 0-4 0M918.0 213.5v4.6M922.8 213.9v4.6M789.9 241.4a2 2 0 1 0 4 0a2 2 0 1 0-4 0M794.7 241.8a2 2 0 1 0 4 0a2 2 0 1 0-4 0M791.9 243.4v4.6M796.7 243.8v4.6M880.3 304.8a2 2 0 1 0 4 0a2 2 0 1 0-4 0M885.1 305.2a2 2 0 1 0 4 0a2 2 0 1 0-4 0M882.3 306.8v4.6M887.1 307.2v4.6M914.6 323.2a2 2 0 1 0 4 0a2 2 0 1 0-4 0M919.4 323.6a2 2 0 1 0 4 0a2 2 0 1 0-4 0M916.6 325.2v4.6M921.4 325.6v4.6M31.0 41.1a2 2 0 1 0 4 0a2 2 0 1 0-4 0M35.8 41.5a2 2 0 1 0 4 0a2 2 0 1 0-4 0M33.0 43.1v4.6M37.8 43.5v4.6M866.5 83.1a2 2 0 1 0 4 0a2 2 0 1 0-4 0M871.3 83.5a2 2 0 1 0 4 0a2 2 0 1 0-4 0M868.5 85.1v4.6M873.3 85.5v4.6M912.5 398.0a2 2 0 1 0 4 0a2 2 0 1 0-4 0M917.3 398.4a2 2 0 1 0 4 0a2 2 0 1 0-4 0M914.5 400.0v4.6M919.3 400.4v4.6M1271.7 353.2a2 2 0 1 0 4 0a2 2 0 1 0-4 0M1276.5 353.6a2 2 0 1 0 4 0a2 2 0 1 0-4 0M1273.7 355.2v4.6M1278.5 355.6v4.6M1194.3 307.7a2 2 0 1 0 4 0a2 2 0 1 0-4 0M1199.1 308.1a2 2 0 1 0 4 0a2 2 0 1 0-4 0M1196.3 309.7v4.6M1201.1 310.1v4.6M1239.8 458.3a2 2 0 1 0 4 0a2 2 0 1 0-4 0M1244.6 458.7a2 2 0 1 0 4 0a2 2 0 1 0-4 0M1241.8 460.3v4.6M1246.6 460.7v4.6M1105.5 428.6a2 2 0 1 0 4 0a2 2 0 1 0-4 0M1110.3 429.0a2 2 0 1 0 4 0a2 2 0 1 0-4 0M1107.5 430.6v4.6M1112.3 431.0v4.6M776.0 162.9a2 2 0 1 0 4 0a2 2 0 1 0-4 0M780.8 163.3a2 2 0 1 0 4 0a2 2 0 1 0-4 0M778.0 164.9v4.6M782.8 165.3v4.6M1016.1 36.5a2 2 0 1 0 4 0a2 2 0 1 0-4 0M1020.9 36.9a2 2 0 1 0 4 0a2 2 0 1 0-4 0M1018.1 38.5v4.6M1022.9 38.9v4.6M1028.2 102.6a2 2 0 1 0 4 0a2 2 0 1 0-4 0M1033.0 103.0a2 2 0 1 0 4 0a2 2 0 1 0-4 0M1030.2 104.6v4.6M1035.0 105.0v4.6M895.9 607.3a2 2 0 1 0 4 0a2 2 0 1 0-4 0M900.7 607.7a2 2 0 1 0 4 0a2 2 0 1 0-4 0M897.9 609.3v4.6M902.7 609.7v4.6M870.3 505.2a2 2 0 1 0 4 0a2 2 0 1 0-4 0M875.1 505.6a2 2 0 1 0 4 0a2 2 0 1 0-4 0M872.3 507.2v4.6M877.1 507.6v4.6M1001.2 383.7a2 2 0 1 0 4 0a2 2 0 1 0-4 0M1006.0 384.1a2 2 0 1 0 4 0a2 2 0 1 0-4 0M1003.2 385.7v4.6M1008.0 386.1v4.6M804.8 338.6a2 2 0 1 0 4 0a2 2 0 1 0-4 0M809.6 339.0a2 2 0 1 0 4 0a2 2 0 1 0-4 0M806.8 340.6v4.6M811.6 341.0v4.6M748.2 236.1a2 2 0 1 0 4 0a2 2 0 1 0-4 0M753.0 236.5a2 2 0 1 0 4 0a2 2 0 1 0-4 0M750.2 238.1v4.6M755.0 238.5v4.6M919.9 566.9a2 2 0 1 0 4 0a2 2 0 1 0-4 0M924.7 567.3a2 2 0 1 0 4 0a2 2 0 1 0-4 0M921.9 568.9v4.6M926.7 569.3v4.6M932.1 455.0a2 2 0 1 0 4 0a2 2 0 1 0-4 0M936.9 455.4a2 2 0 1 0 4 0a2 2 0 1 0-4 0M934.1 457.0v4.6M938.9 457.4v4.6M1243.7 411.7a2 2 0 1 0 4 0a2 2 0 1 0-4 0M1248.5 412.1a2 2 0 1 0 4 0a2 2 0 1 0-4 0M1245.7 413.7v4.6M1250.5 414.1v4.6M820.6 105.5a2 2 0 1 0 4 0a2 2 0 1 0-4 0M825.4 105.9a2 2 0 1 0 4 0a2 2 0 1 0-4 0M822.6 107.5v4.6M827.4 107.9v4.6M1079.6 508.0a2 2 0 1 0 4 0a2 2 0 1 0-4 0M1084.4 508.4a2 2 0 1 0 4 0a2 2 0 1 0-4 0M1081.6 510.0v4.6M1086.4 510.4v4.6M1043.4 125.9a2 2 0 1 0 4 0a2 2 0 1 0-4 0M1048.2 126.3a2 2 0 1 0 4 0a2 2 0 1 0-4 0M1045.4 127.9v4.6M1050.2 128.3v4.6M835.1 604.6a2 2 0 1 0 4 0a2 2 0 1 0-4 0M839.9 605.0a2 2 0 1 0 4 0a2 2 0 1 0-4 0M837.1 606.6v4.6M841.9 607.0v4.6M1110.9 591.6a2 2 0 1 0 4 0a2 2 0 1 0-4 0M1115.7 592.0a2 2 0 1 0 4 0a2 2 0 1 0-4 0M1112.9 593.6v4.6M1117.7 594.0v4.6M1009.8 124.7a2 2 0 1 0 4 0a2 2 0 1 0-4 0M1014.6 125.1a2 2 0 1 0 4 0a2 2 0 1 0-4 0M1011.8 126.7v4.6M1016.6 127.1v4.6M816.1 218.3a2 2 0 1 0 4 0a2 2 0 1 0-4 0M820.9 218.7a2 2 0 1 0 4 0a2 2 0 1 0-4 0M818.1 220.3v4.6M822.9 220.7v4.6M1036.3 467.3a2 2 0 1 0 4 0a2 2 0 1 0-4 0M1041.1 467.7a2 2 0 1 0 4 0a2 2 0 1 0-4 0M1038.3 469.3v4.6M1043.1 469.7v4.6M889.0 237.4a2 2 0 1 0 4 0a2 2 0 1 0-4 0M893.8 237.8a2 2 0 1 0 4 0a2 2 0 1 0-4 0M891.0 239.4v4.6M895.8 239.8v4.6M1068.7 48.0a2 2 0 1 0 4 0a2 2 0 1 0-4 0M1073.5 48.4a2 2 0 1 0 4 0a2 2 0 1 0-4 0M1070.7 50.0v4.6M1075.5 50.4v4.6M983.0 89.7a2 2 0 1 0 4 0a2 2 0 1 0-4 0M987.8 90.1a2 2 0 1 0 4 0a2 2 0 1 0-4 0M985.0 91.7v4.6M989.8 92.1v4.6M818.6 319.1a2 2 0 1 0 4 0a2 2 0 1 0-4 0M823.4 319.5a2 2 0 1 0 4 0a2 2 0 1 0-4 0M820.6 321.1v4.6M825.4 321.5v4.6M1008.5 332.4a2 2 0 1 0 4 0a2 2 0 1 0-4 0M1013.3 332.8a2 2 0 1 0 4 0a2 2 0 1 0-4 0M1010.5 334.4v4.6M1015.3 334.8v4.6M965.7 291.9a2 2 0 1 0 4 0a2 2 0 1 0-4 0M970.5 292.3a2 2 0 1 0 4 0a2 2 0 1 0-4 0M967.7 293.9v4.6M972.5 294.3v4.6M911.9 530.4a2 2 0 1 0 4 0a2 2 0 1 0-4 0M916.7 530.8a2 2 0 1 0 4 0a2 2 0 1 0-4 0M913.9 532.4v4.6M918.7 532.8v4.6M841.8 67.2a2 2 0 1 0 4 0a2 2 0 1 0-4 0M846.6 67.6a2 2 0 1 0 4 0a2 2 0 1 0-4 0M843.8 69.2v4.6M848.6 69.6v4.6M1135.6 542.5a2 2 0 1 0 4 0a2 2 0 1 0-4 0M1140.4 542.9a2 2 0 1 0 4 0a2 2 0 1 0-4 0M1137.6 544.5v4.6M1142.4 544.9v4.6M1240.7 233.7a2 2 0 1 0 4 0a2 2 0 1 0-4 0M1245.5 234.1a2 2 0 1 0 4 0a2 2 0 1 0-4 0M1242.7 235.7v4.6M1247.5 236.1v4.6M1060.3 468.3a2 2 0 1 0 4 0a2 2 0 1 0-4 0M1065.1 468.7a2 2 0 1 0 4 0a2 2 0 1 0-4 0M1062.3 470.3v4.6M1067.1 470.7v4.6M985.9 122.1a2 2 0 1 0 4 0a2 2 0 1 0-4 0M990.7 122.5a2 2 0 1 0 4 0a2 2 0 1 0-4 0M987.9 124.1v4.6M992.7 124.5v4.6M1174.4 265.9a2 2 0 1 0 4 0a2 2 0 1 0-4 0M1179.2 266.3a2 2 0 1 0 4 0a2 2 0 1 0-4 0M1176.4 267.9v4.6M1181.2 268.3v4.6M884.4 183.7a2 2 0 1 0 4 0a2 2 0 1 0-4 0M889.2 184.1a2 2 0 1 0 4 0a2 2 0 1 0-4 0M886.4 185.7v4.6M891.2 186.1v4.6M1160.1 454.5a2 2 0 1 0 4 0a2 2 0 1 0-4 0M1164.9 454.9a2 2 0 1 0 4 0a2 2 0 1 0-4 0M1162.1 456.5v4.6M1166.9 456.9v4.6M817.2 182.8a2 2 0 1 0 4 0a2 2 0 1 0-4 0M822.0 183.2a2 2 0 1 0 4 0a2 2 0 1 0-4 0M819.2 184.8v4.6M824.0 185.2v4.6M850.1 145.6a2 2 0 1 0 4 0a2 2 0 1 0-4 0M854.9 146.0a2 2 0 1 0 4 0a2 2 0 1 0-4 0M852.1 147.6v4.6M856.9 148.0v4.6M977.0 35.6a2 2 0 1 0 4 0a2 2 0 1 0-4 0M981.8 36.0a2 2 0 1 0 4 0a2 2 0 1 0-4 0M979.0 37.6v4.6M983.8 38.0v4.6M1272.3 273.5a2 2 0 1 0 4 0a2 2 0 1 0-4 0M1277.1 273.9a2 2 0 1 0 4 0a2 2 0 1 0-4 0M1274.3 275.5v4.6M1279.1 275.9v4.6M991.8 532.4a2 2 0 1 0 4 0a2 2 0 1 0-4 0M996.6 532.8a2 2 0 1 0 4 0a2 2 0 1 0-4 0M993.8 534.4v4.6M998.6 534.8v4.6M1244.9 568.7a2 2 0 1 0 4 0a2 2 0 1 0-4 0M1249.7 569.1a2 2 0 1 0 4 0a2 2 0 1 0-4 0M1246.9 570.7v4.6M1251.7 571.1v4.6M842.8 467.6a2 2 0 1 0 4 0a2 2 0 1 0-4 0M847.6 468.0a2 2 0 1 0 4 0a2 2 0 1 0-4 0M844.8 469.6v4.6M849.6 470.0v4.6M963.0 166.6a2 2 0 1 0 4 0a2 2 0 1 0-4 0M967.8 167.0a2 2 0 1 0 4 0a2 2 0 1 0-4 0M965.0 168.6v4.6M969.8 169.0v4.6M909.8 348.2a2 2 0 1 0 4 0a2 2 0 1 0-4 0M914.6 348.6a2 2 0 1 0 4 0a2 2 0 1 0-4 0M911.8 350.2v4.6M916.6 350.6v4.6M1272.4 578.8a2 2 0 1 0 4 0a2 2 0 1 0-4 0M1277.2 579.2a2 2 0 1 0 4 0a2 2 0 1 0-4 0M1274.4 580.8v4.6M1279.2 581.2v4.6M796.4 264.1a2 2 0 1 0 4 0a2 2 0 1 0-4 0M801.2 264.5a2 2 0 1 0 4 0a2 2 0 1 0-4 0M798.4 266.1v4.6M803.2 266.5v4.6M945.9 585.2a2 2 0 1 0 4 0a2 2 0 1 0-4 0M950.7 585.6a2 2 0 1 0 4 0a2 2 0 1 0-4 0M947.9 587.2v4.6M952.7 587.6v4.6M1068.8 126.5a2 2 0 1 0 4 0a2 2 0 1 0-4 0M1073.6 126.9a2 2 0 1 0 4 0a2 2 0 1 0-4 0M1070.8 128.5v4.6M1075.6 128.9v4.6"/>
<polygon points="1027,665 1110,636 1185,627.5 1280,624.5 1280,640 1210,642.5 1135,650 1075,665" fill="#ffffff"/>
<polygon points="0,44 21,71 10,77 0,84" fill="#d6e3ea"/>
<path d="M47 0Q34 22 24 40T0 75" fill="none" stroke="#c9e0f0" stroke-width="3"/>
<polygon points="67.5,0 51,27 38,50 28,72 20.8,91.5 9,122 0,148 0,166 5.4,151 17,122 27,91.5 36,75 50.5,50 64,27 81,0" fill="#ffffff"/>
<polygon points="0,92.4 18,84 28,72 21.7,93 0,106" fill="#ffffff"/>
<polygon points="217,0 305,0 333,66 318,66 293,15 280,18 254,21 237,16" fill="#ffffff"/>
<polyline points="195,44 237.5,22.5" fill="none" stroke="#ffffff" stroke-width="2.5"/>
<polyline points="637.5,0 650,14" fill="none" stroke="#ffffff" stroke-width="3" stroke-linecap="round"/>
<polygon points="135,665 207.5,644 275,617.5 320,601 420,584 482.5,560 502.5,559 570,592.5 595,601 645,598 650,611 602.5,614.5 570,602.5 500,572.5 420,594.5 320,612.5 275,627.5 225,652.5 190,665" fill="#ffffff"/>
<polyline points="410.6,530 452,569" fill="none" stroke="#ffffff" stroke-width="8"/>
<polyline points="455.7,530 480,560.5" fill="none" stroke="#ffffff" stroke-width="7.5"/>
<polyline points="528.8,530 572,592" fill="none" stroke="#ffffff" stroke-width="8"/>
<polyline points="614.4,530 687.7,667" fill="none" stroke="#ffffff" stroke-width="13"/>
<polygon points="608,530 636,530 640,552 626,560" fill="#ffffff"/>
<polyline points="692,528 637,557" fill="none" stroke="#ffffff" stroke-width="7"/>
<polyline points="615,611 626,667" fill="none" stroke="#ffffff" stroke-width="8"/>
<polyline points="560,639.5 586,615" fill="none" stroke="#f4f4f4" stroke-width="3"/>
<polyline points="55,556 87.5,630 92.5,665" fill="none" stroke="#ffffff" stroke-width="3"/>
<polyline points="222.5,592.5 239,629" fill="none" stroke="#ffffff" stroke-width="3" stroke-linecap="round"/>
<path d="M509 639Q530 648 545 651Q562 640 570 632.5T582.5 617.5" fill="none" stroke="#fff" stroke-width="3" stroke-linecap="round"/>
<polyline points="722,616 682,639" fill="none" stroke="#f3f3f3" stroke-width="2.6" stroke-linecap="round"/>
<polygon points="684,621 697,614 701,621 688,628" fill="#d6ccc2"/>
<polyline points="700,127.5 790,126.5 824,130.5 840,146 878,199 920,218.5 965,229.5 1030,232 1110,225.5 1185,220.5 1290,223" fill="none" stroke="#5fa2e2" stroke-width="7.4" stroke-linejoin="round" opacity=".9"/>
<polyline points="700,127.5 790,126.5 824,130.5 840,146 878,199 920,218.5 965,229.5 1030,232 1110,225.5 1185,220.5 1290,223" fill="none" stroke="#e9ece2" stroke-width="5.6" stroke-linejoin="round"/>
<polyline points="700,127.5 790,126.5 824,130.5 840,146 878,199 920,218.5 965,229.5 1030,232 1110,225.5 1185,220.5 1290,223" fill="none" stroke="#b89a6a" stroke-width="1.2" stroke-dasharray="5 3 1.5 3"/>
<polyline points="360,71 378,54 390,45 400,37.5 418,30 437.5,24 462.5,19 485,15 504,12.5 516,7" fill="none" stroke="#5fa2e2" stroke-width="7.4" stroke-linejoin="round" opacity=".9"/>
<polyline points="360,71 378,54 390,45 400,37.5 418,30 437.5,24 462.5,19 485,15 504,12.5 516,7" fill="none" stroke="#e6e6e4" stroke-width="5.6" stroke-linejoin="round"/>
<polyline points="360,71 378,54 390,45 400,37.5 418,30 437.5,24 462.5,19 485,15 504,12.5" fill="none" stroke="#bfa775" stroke-width="1.3" stroke-dasharray="5 3"/>
<polygon points="510,5 523,-2 543,-2 527,10 514,12" fill="#ffffff"/>
<g fill="none" stroke="#5fa2e2" stroke-width="1" opacity=".9">
<polyline points="777,33 830,25.5 885,25 943,33 1000,37 1060,40 1088,38 1180,36 1280,39"/>
<polyline points="943.75,0 943.75,33"/>
<polyline points="1100,0 1088,38"/>
<polyline points="825,129 1000,130 1077,129 1180,128.5 1280,129"/>
<polyline points="1000,130 1011,166 1030,229"/>
<polyline points="700,183 825,135"/>
<polyline points="1122,229 1212,332 1216,338 1222,345 1280,343"/>
<polyline points="1216,338 1120,388"/>
<polyline points="1222,345 1211,348 1207.5,420 1204,486 1196,530 1114,538 1047,543"/>
<polyline points="745,272.5 759,292 815,260 918,221.5"/>
<polyline points="759,292 745,310 748,350 762,375 784,390 800,430 825,481 827.5,532 831,575 827.5,609 826,610"/>
<polyline points="976,453 971,515 962.5,556 944,614 948,665"/>
<polyline points="827.5,609 944,614"/>
<polyline points="1047,543 1050,652.5"/>
<polyline points="1114,538 1110,632"/>
<polyline points="1232.5,486 1280,488"/>
<polyline points="1232.5,486 1236,612.5"/>
<polyline points="1011,665 1050,652.5 1110,632 1192,615 1280,612.5"/>
<polyline points="1075,665 1135,650 1210,642.5 1280,640"/>
<polyline points="700,481 745,459 800,430"/>
<polyline points="745,475 789.5,550 826,531"/>
<polyline points="760,500 789.5,550"/>
<polyline points="789.5,550 730,584 677.5,611"/>
<polyline points="717.5,562.5 730,584"/>
<polyline points="682,613 760,577.5 787.5,630 826,610"/>
<polyline points="787.5,630 725,665"/>
<polyline points="640,545 699,665"/>
<polyline points="645,545 706,665"/>
<polyline points="640,556 690,665"/>
<polyline points="69,20 102.5,64 110,80"/>
<polyline points="94,49 215,0"/>
<polyline points="170,47.5 235,17.5"/>
<polyline points="170,47.5 180,66"/>
<polyline points="240,64 272,44"/>
<polyline points="310,0 340,66"/>
<polyline points="320,0 347.5,66"/>
<polyline points="0,40 28,28 58,0"/>
<polyline points="0,78 14,62 26,30 27,28"/>
<polyline points="0,160 27,95 52,50 84,0"/>
<polyline points="0,140 15,105 36,55 69,0"/>
<polyline points="0,170 20,120 30,97"/>
<polyline points="0,92 18,83"/>
<polyline points="0,107 21,94"/>
<polyline points="255,0 262,30 270,50 280,66"/>
<polyline points="275,0 283,40 290,66"/>
<polyline points="225,0 240,15 255,19 290,14 300,30 315,66"/>
<polyline points="504,19 525,10 541,1"/>
<polyline points="509,9.4 510,0"/>
<polyline points="529,10 532.5,31 507.5,36"/>
<polyline points="502.5,20 515,66"/>
<polyline points="517.5,32.5 524,52.5 539,52.5"/>
<polyline points="664,66 692.5,52.5 777.5,32.5"/>
<polyline points="0,218.7 92,164.6"/>
<polyline points="0,574 47.5,556 92,534"/>
<polyline points="0,411.7 92,365"/>
<polyline points="0,491.4 92,439"/>
<polyline points="122.5,665 207.5,641 300,604 320,599 420,580.5 482,558 502,556"/>
<polyline points="207.5,665 280,625 320,615.5 422.5,595 501,572 570,604 582.5,610 575,627.5 581,665"/>
<polyline points="290,581 320,560 331,554 326,530"/>
<polyline points="290,581 299,604"/>
<polyline points="280,625 291,665"/>
<polyline points="421,596 437.5,665"/>
<polyline points="322.5,614 335,665"/>
<polyline points="595,530 617.5,665"/>
<polyline points="602.5,530 624,665"/>
<polyline points="610,530 640,582"/>
<polyline points="502,556 570,590 595,598 640,592"/>
<polyline points="395,530 420,581"/>
<polyline points="472,530 485,556"/>
<polyline points="575,575 590,568 600,598"/>
</g>
<polyline points="0,456.8 92,405.7" fill="none" stroke="#9aa89a" stroke-width="1"/>
<polyline points="815,260 918,221 965,232 1005,237 1120,388 996,458 976,453 815,260" fill="none" stroke="#5a5f6e" stroke-width="1" opacity=".6"/>
<polyline points="602.5,600 617.5,596" fill="none" stroke="#333" stroke-width="1.2"/>
<polyline points="605,614.5 620,611" fill="none" stroke="#333" stroke-width="1.2"/>
<polyline points="252,6 275,4" fill="none" stroke="#777" stroke-width="1.2"/>
<polyline points="254,21 280,18" fill="none" stroke="#777" stroke-width="1.2"/>
<g fill="#d9cec6" stroke="#a81219" stroke-width="1.8" stroke-linejoin="miter">
<polygon points="1024.5,552.5 1047.5,555 1044.5,575 1022.5,572"/>
<polygon points="1018,615 1048.75,617.5 1047,640.5 1015.5,638"/>
<polygon points="982,627 992.5,626 992.5,629.5 1008.75,629.5 1008,648 982,648"/>
<polygon points="668,541 686,536 690,546 696,545 700,555 696,558 699,565 682,573 676,560 670,562 667,553 671,551"/>
<polygon points="704.5,530 725,530 736,552.5 719,561"/>
<polygon points="730,602.5 752,592.5 764,614 740,625"/>
<polygon points="771,665 786,651 799,665"/>
<polygon points="110,0 131,0 117.5,8"/>
<polygon points="152.5,0 179,0 180.5,4 161,15"/>
<polygon points="44.5,89 79.5,65.5 90.5,81 54,104.5"/>
<polygon points="184,53 200,45 208,56 212,55 220,70 192,70"/>
<polygon points="421,59 426,56 425,46 475,27.5 482.5,41 434,60 447.5,70 421,70"/>
<polygon points="491,25 501,23 511,60 495,64 492.5,56 497.5,54"/>
<polygon points="515.5,20.5 524,19 525.5,26 517.5,28"/>
<polygon points="660,0 684,0 684.5,3 665,10"/>
<polygon points="6.6,248 22.5,243.7 31.5,270.7 15,276.8"/>
<polygon points="12.6,303 35.5,287.3 48,306 27.7,321.9"/>
<polygon points="-5,520 0,526 9,539 0,547.5 -5,550"/>
<polygon points="188,551 215,530 226,530 230,546 197.5,567.5"/>
<polygon points="217.5,567 240,552.5 255,576 242,585 236,576 226,581"/>
<polygon points="365,546 380,543 389,570 374,574.5"/>
<polygon points="489,530 502.5,551 520,530"/>
<polygon points="524.5,616 535,612 547,631 535.5,639"/>
<polygon points="482.5,665 484,664 512.5,658 515,665"/>
</g>
<polygon points="104,576 116,570 121,574.5 127.5,575 131,586 130,587.5 135,597.5 117.5,606" fill="#d9cec6" stroke="#a81219" stroke-width="1.8" stroke-dasharray="2 1.6"/>
<polygon points="30,100 44,91 54,105 40,115" fill="#d9cec6"/>
<polygon points="262.5,580 272.5,574 284,590 274,597" fill="#d6ccc2"/>
<polyline points="72.5,93 92,122" fill="none" stroke="#a81219" stroke-width="1.6"/>
<polyline points="692,66 697,60 702,66" fill="none" stroke="#a81219" stroke-width="1.4"/>
<polyline points="720,66 727,58 735,66" fill="none" stroke="#a81219" stroke-width="1.4"/>
<circle cx="461" cy="55" r="1.6" fill="none" stroke="#a81219" stroke-width="1"/><circle cx="468" cy="53" r="1.6" fill="none" stroke="#a81219" stroke-width="1"/>
<g font-family="Liberation Sans,Arial,sans-serif" font-size="5.6" font-weight="bold" fill="#3a93e6" text-anchor="middle">
<text x="1135" y="296">1347/3</text>
<text x="1071" y="474">1347/4</text>
<text x="1077.5" y="563">1348/2</text>
<text x="889" y="563">1346/2</text>
<text x="794" y="493">1345/10</text>
<text x="745" y="544">1345/12</text>
<text x="699.5" y="584">1345/11</text>
<text x="675" y="602">1345/5</text>
<text x="795" y="600">1345/6</text>
<text x="756" y="630">1345/10</text>
<text x="686" y="622">1345/7</text>
<text x="710" y="663">1345/9</text>
<text x="651" y="557">1344/1</text>
<text x="134" y="12">529</text>
<text x="34" y="42">528/3</text>
<text x="231" y="52">528/2</text>
<text x="67.5" y="144">524/2</text>
<text x="5" y="94">526/2</text>
<text x="319" y="60">528/7</text>
<text x="332.5" y="22">1710/12</text>
<text x="531" y="50">1718/1</text>
<text x="37.6" y="496">549</text>
<text x="3" y="445">550</text>
<text x="87" y="605">548</text>
<text x="422.5" y="561">553/5</text>
<text x="592.5" y="575">555/4</text>
<text x="627.5" y="585">555/6</text>
<text x="630" y="607">585/10</text>
<text x="539" y="664">584/5</text>
<text x="984" y="82">1349</text>
<text x="931" y="174">1351</text>
<text x="777.5" y="191">1350</text>
<text x="1279" y="420">1347</text>
<text x="645" y="618">552/2</text>
<text x="655" y="650">552/2</text>
<text x="648" y="660">552/1</text>
<text x="668" y="660">3/2</text>
</g>
<g font-family="Liberation Sans,Arial,sans-serif" font-size="12" font-weight="bold" fill="#eef0ff" stroke="#33409a" stroke-width="1.7" paint-order="stroke" text-anchor="middle" stroke-linejoin="round">
<text x="1033" y="630">310</text>
<text x="679" y="552">308</text>
<text x="742" y="609">308A</text>
<text x="79" y="85">399</text>
<text x="204.5" y="54">339</text>
<text x="24.7" y="295">50</text>
<text x="68.6" y="481">52</text>
<text x="246" y="572">53</text>
<text x="380" y="562">57</text>
<text x="510" y="534">306</text>
</g>
<g fill="#5f7be6">
<circle cx="1033" cy="634.5" r="2.8"/>
<circle cx="679" cy="556.5" r="2.8"/>
<circle cx="740" cy="612.5" r="2.8"/>
<circle cx="84" cy="90" r="2.8"/>
<circle cx="204.5" cy="58" r="2.8"/>
<circle cx="24.7" cy="299" r="2.8"/>
<circle cx="68.3" cy="485.4" r="2.8"/>
<circle cx="246" cy="576.5" r="2.8"/>
<circle cx="379.5" cy="566" r="2.8"/>
<circle cx="510" cy="540" r="2.8"/>
</g>
<g stroke="#a81219" stroke-width="1">
<path d="M1035 563h2"/>
<path d="M995 638h2"/>
<path d="M18 260h2"/>
<path d="M30 306h2"/>
<path d="M208 548h2"/>
<path d="M236 566h2"/>
<path d="M536 625h2"/>
</g>
<path d="M977.5 342.5L990 355.5M990 342.5L977.5 355.5" stroke="#f0327e" stroke-width="2" fill="none"/>
<polygon points="86,316 91,311 91,321" fill="#a5c8e0"/>
<circle cx="1.5" cy="308" r="1.6" fill="#fff"/>
<circle cx="11.4" cy="450" r="1.2" fill="#7a8a7a"/>
</svg>
<div id="dlg">
 <div id="ttl"><span>Informacja o obiektach</span>
  <svg id="cls" viewBox="0 0 9 9"><path d="M1.2 1.2L7.8 7.8M7.8 1.2L1.2 7.8" stroke="#6da4cc" stroke-width="2.4" fill="none"/></svg>
 </div>
 <div id="tabs">
  <div id="nav">
   <div class="tab" style="left:2px;width:134px">Dane podstawowe</div>
   <div class="tab on" style="left:139px;width:65px">Działki</div>
   <div class="tab" style="left:206px;width:69px">Adresy</div>
  </div>
  <div id="box"><div style="position:absolute;left:0;top:1px;width:603px;height:1px">
   <div id="hd">Działka ewidencyjna</div>
   <div class="r" style="top:26px"><i>Identyfikator działki</i><b>181004_2.0004.1347/5</b></div>
   <div class="r" style="top:51px"><i>Województwo</i><b>podkarpackie</b></div>
   <div class="r" style="top:76px"><i>Powiat</i><b>powiat łańcucki</b></div>
   <div class="r" style="top:101px"><i>Gmina</i><b>ŁAŃCUT</b></div>
   <div class="r" style="top:126px"><i>Obręb</i><b>HANDZLÓWKA</b></div>
   <div class="r" style="top:151px"><i>Numer działki</i><b>1347/5</b></div>
   <div class="r" style="top:176px"><i>Pole pow. w ewidencji gruntów (ha)</i><b>0.6819</b></div>
   <div class="r" style="top:201px"><i>Grupa rejestrowa</i><b>7</b></div>
   <div class="r" style="top:226px"><i>Oznaczenie konturu</i><b>S/RIVb,RIVb</b></div>
   <div class="r" style="top:251px"><i>Data publikacji danych</i><b>2026-03-17</b></div>
   <div class="r" style="top:304px"><span style="position:absolute;left:114px">Zakoloruj:</span><span style="position:absolute;left:387px;color:#2a2aa8">Usuń zaznaczenia</span></div>
   <div class="sw" style="left:172px;top:306px;width:43px;height:21px;border:2px solid #000;background:#ffa0a0"></div>
   <div class="sw" style="left:228px;top:308px;width:40px;height:17px;background:#a0ffa0"></div>
   <div class="sw" style="left:281px;top:308px;width:40px;height:17px;background:#b4b4ff"></div>
   <div class="sw" style="left:334px;top:308px;width:40px;height:17px;background:#ffff64"></div>
   <div class="r" style="top:341px;left:10px;font-size:13.6px;font-weight:bold;color:#b01cb0">Uzyskaj raport z wieloma informacjami dla działki <em>181004_2.0004.1347/5</em> w serwisie OnGeo</div>
  </div></div>
 </div>
<svg style="position:absolute;left:638px;top:454px" width="12" height="12" viewBox="0 0 12 12"><path d="M1 11L11 1M5 11L11 5M9 11L11 9" stroke="#b9c7d3" stroke-width="1" fill="none"/></svg>
</div>
</body></html>
